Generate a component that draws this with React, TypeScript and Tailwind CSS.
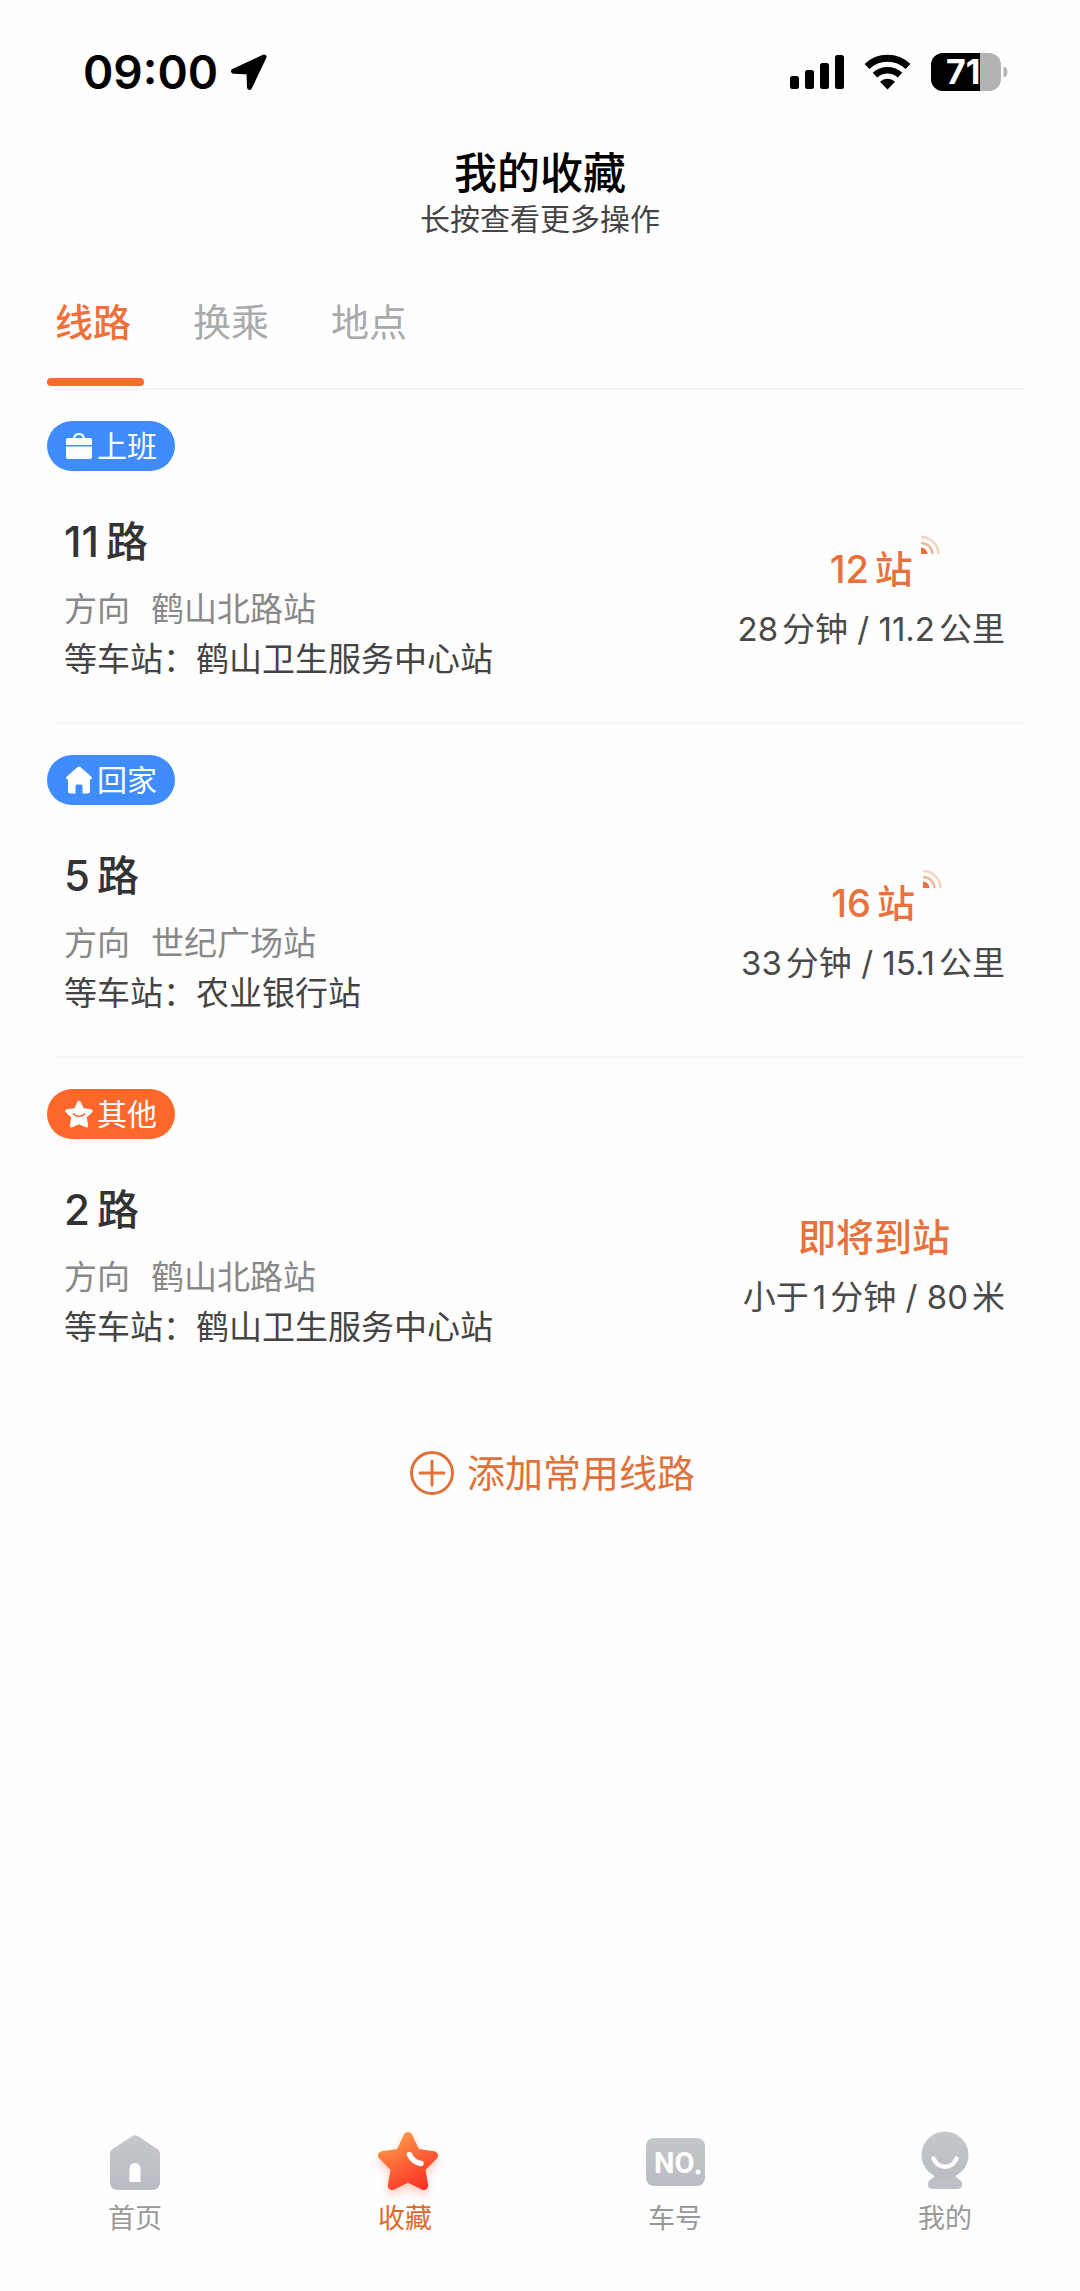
import { useState } from 'react';
import type { ReactNode } from 'react';

type TagKind = 'work' | 'home' | 'other';

interface FavoriteRoute {
  id: string;
  tag: TagKind;
  number: string;
  direction: string;
  stop: string;
  stopsLeft?: string;
  eta: string[];
}

const TABS = ['线路', '换乘', '地点'];

const ROUTES: FavoriteRoute[] = [
  {
    id: '11',
    tag: 'work',
    number: '11',
    direction: '鹤山北路站',
    stop: '鹤山卫生服务中心站',
    stopsLeft: '12',
    eta: ['28', '分钟 / 11.2', '公里'],
  },
  {
    id: '5',
    tag: 'home',
    number: '5',
    direction: '世纪广场站',
    stop: '农业银行站',
    stopsLeft: '16',
    eta: ['33', '分钟 / 15.1', '公里'],
  },
  {
    id: '2',
    tag: 'other',
    number: '2',
    direction: '鹤山北路站',
    stop: '鹤山卫生服务中心站',
    eta: ['小于', '1', '分钟 / 80', '米'],
  },
];

function BriefcaseIcon() {
  return (
    <svg width="28" height="28" viewBox="0 0 28 28" fill="none" aria-hidden="true">
      <path d="M9 6.500C9.500 3 11.500 2 14 2s4.500 1 5 4.500" stroke="#fff" strokeWidth="2" />
      <path d="M3 6h22a2 2 0 0 1 2 2v5H1V8a2 2 0 0 1 2-2Z" fill="#fff" />
      <path d="M1 14.500h26V25a2 2 0 0 1-2 2H3a2 2 0 0 1-2-2V14.500Z" fill="#fff" />
    </svg>
  );
}

function HouseIcon() {
  return (
    <svg width="28" height="28" viewBox="0 0 28 28" aria-hidden="true">
      <path
        d="M12.600 1c.8-.7 2-.7 2.800 0l11 9.700c1.200 1.100.5 2.800-1 2.800H25V25a2.500 2.500 0 0 1-2.500 2.500h-5V20a1.500 1.500 0 0 0-1.500-1.500h-4a1.500 1.500 0 0 0-1.500 1.500v7.500h-5A2.500 2.500 0 0 1 3 25V13.500h-.4c-1.500 0-2.200-1.700-1-2.800Z"
        fill="#fff"
      />
    </svg>
  );
}

function SmileStarIcon() {
  return (
    <svg width="28" height="28" viewBox="0 0 28 28" fill="none" aria-hidden="true">
      <path
        d="m14 2.500 3.400 7.300 8.600 1.200-6.100 5.700 1.500 9-7.400-3.200-7.400 3.200 1.500-9L2 11l8.600-1.200Z"
        fill="#fff"
        stroke="#fff"
        strokeWidth="3.500"
        strokeLinejoin="round"
      />
      <path d="M8.500 14c3 3 8 3 11 0" stroke="#ff672b" strokeWidth="1.700" strokeLinecap="round" />
    </svg>
  );
}

const TAGS: Record<TagKind, { label: string; className: string; icon: ReactNode }> = {
  work: { label: '上班', className: 'bg-[#3f8cff]', icon: <BriefcaseIcon /> },
  home: { label: '回家', className: 'bg-[#3f8cff]', icon: <HouseIcon /> },
  other: { label: '其他', className: 'bg-[#ff672b]', icon: <SmileStarIcon /> },
};

function StatusBar() {
  return (
    <div className="flex h-36 items-center justify-between pl-[83px] pr-[72px] text-black">
      <div className="flex items-center gap-3">
        <span className="text-[46px] leading-none font-semibold">09:00</span>
        <svg width="38" height="38" viewBox="0 0 38 38" aria-hidden="true">
          <path
            d="M34 4 3.500 18.200l15.500.8.500 15.500Z"
            fill="currentColor"
            stroke="currentColor"
            strokeWidth="5"
            strokeLinejoin="round"
          />
        </svg>
      </div>
      <div className="flex items-center">
        <svg width="54" height="36" viewBox="0 0 54 36" fill="currentColor" aria-hidden="true">
          <rect x="0" y="22" width="9" height="13" rx="2.500" />
          <rect x="15" y="16" width="9" height="19" rx="2.500" />
          <rect x="30" y="9" width="9" height="26" rx="2.500" />
          <rect x="45" y="1" width="9" height="34" rx="2.500" />
        </svg>
        <svg className="ml-5" width="47" height="36" viewBox="0 0 47 36" fill="none" aria-hidden="true">
          <path d="M3 12.500a29.500 29.500 0 0 1 41 0" stroke="currentColor" strokeWidth="7" />
          <path d="M11 21.200a18 18 0 0 1 25 0" stroke="currentColor" strokeWidth="6.500" />
          <path d="M23.500 35.500 16 27.800a10.800 10.800 0 0 1 15 0Z" fill="currentColor" />
        </svg>
        <svg className="ml-5" width="77" height="40" viewBox="0 0 77 40" role="img" aria-label="电量 71%">
          <rect x="0" y="1" width="70" height="38" rx="12" fill="#b3b3b3" />
          <path d="M12 1h37v38H12A12 12 0 0 1 0 27V13A12 12 0 0 1 12 1Z" fill="#000" />
          <path d="M72.500 14.500c3 .8 4 3 4 5.500s-1 4.700-4 5.500Z" fill="#b3b3b3" />
          <text x="15" y="32" fontSize="34" fontWeight="700" fill="#fff">
            71
          </text>
        </svg>
      </div>
    </div>
  );
}

function LiveIcon() {
  return (
    <svg
      className="absolute -top-1 left-full ml-2"
      width="20"
      height="20"
      viewBox="0 0 20 20"
      fill="none"
      aria-hidden="true"
    >
      <path d="M0 12.500A6.500 6.500 0 0 1 6.500 19H0Z" fill="#e8713c" />
      <path d="M0 8a11.500 11.500 0 0 1 11.500 11" stroke="#f3b597" strokeWidth="2.500" />
      <path d="M0 2a17.500 17.500 0 0 1 17.500 17" stroke="#f8d3c2" strokeWidth="2.500" />
    </svg>
  );
}

function RouteCard({ route, last }: { route: FavoriteRoute; last: boolean }) {
  const tag = TAGS[route.tag];

  return (
    <li>
      <div className="pt-[31px] pb-[38px]">
        <span
          className={`inline-flex h-[50px] items-center gap-1 rounded-full px-[18px] align-top text-[30px] text-white ${tag.className}`}
        >
          {tag.icon}
          {tag.label}
        </span>
        <div className="mt-[43px] flex items-center justify-between pr-[19px] pl-[17px]">
          <div className="text-[33px] leading-[50px]">
            <h2 className="mb-[14px] flex gap-[7px] text-[42px] leading-[56px] font-medium text-[#333]">
              <span>{route.number}</span>
              <span>路</span>
            </h2>
            <p className="flex gap-[21px] text-[#888]">
              <span>方向</span>
              <span>{route.direction}</span>
            </p>
            <p className="text-[#444]">等车站：{route.stop}</p>
          </div>
          <div className="flex flex-col items-center leading-[60px]">
            <p className="relative flex gap-[6px] text-[38px] font-medium text-[#e8713c]">
              {route.stopsLeft ? (
                <>
                  <span>{route.stopsLeft}</span>
                  <span>站</span>
                  <LiveIcon />
                </>
              ) : (
                '即将到站'
              )}
            </p>
            <p className="flex gap-1 text-[33px] text-[#4a4a4a]">
              {route.eta.map((part) => (
                <span key={part}>{part}</span>
              ))}
            </p>
          </div>
        </div>
      </div>
      {last ? null : <hr className="ml-2 border-t-2 border-[#f7f7f7]" />}
    </li>
  );
}

function NavHomeIcon() {
  return (
    <svg width="60" height="60" viewBox="0 0 60 60" aria-hidden="true">
      <path
        d="M27 5.200c1.800-1.200 4.200-1.200 6 0l19 12.600c1.900 1.200 3 3 3 5.200v28c0 5-3 8-8 8H13c-5 0-8-3-8-8V23c0-2.200 1.100-4 3-5.200Z"
        fill="url(#gray)"
      />
      <path d="M24.500 51V37.500a5.500 5.500 0 0 1 11 0V51Z" fill="#fff" />
    </svg>
  );
}

function NavStarIcon() {
  return (
    <svg className="ml-[6px] overflow-visible" width="60" height="60" viewBox="0 0 60 60" fill="none" aria-hidden="true">
      <defs>
        <linearGradient id="star" x1="14" y1="6" x2="42" y2="58" gradientUnits="userSpaceOnUse">
          <stop stopColor="#ff9a4a" />
          <stop offset="0.5" stopColor="#fb6334" />
          <stop offset="1" stopColor="#ff3126" />
        </linearGradient>
        <filter id="glow" x="-30%" y="-30%" width="160%" height="170%">
          <feDropShadow dx="0" dy="5" stdDeviation="4" floodColor="#ff5a36" floodOpacity="0.3" />
        </filter>
      </defs>
      <path
        d="M25.800 3.800c1.800-3.700 6.600-3.700 8.400 0l6.600 14.300 15.300 2.100c4 .6 5.300 4.700 2.500 7.500L47.500 38.800l2.600 14.900c.6 4-3 6.400-6.400 4.700L30 51.800l-13.700 6.600c-3.400 1.700-7-.7-6.400-4.700l2.600-14.900L1.400 27.700c-2.800-2.800-1.500-6.900 2.500-7.500l15.300-2.100Z"
        fill="url(#star)"
        filter="url(#glow)"
      />
      <path d="M31.500 23.500c2 4.800 6.200 8 11.500 9" stroke="#fff" strokeWidth="5.500" strokeLinecap="round" />
    </svg>
  );
}

function NavNumberIcon() {
  return (
    <svg width="60" height="60" viewBox="0 0 60 60" aria-hidden="true">
      <rect x="1" y="7" width="59" height="48" rx="8" fill="url(#gray)" />
      <text x="9" y="42" fontSize="29" fontWeight="700" fill="#fff" className="font-['Roboto',sans-serif]">
        NO
      </text>
      <circle cx="53" cy="41" r="2.500" fill="#fff" />
    </svg>
  );
}

function NavMeIcon() {
  return (
    <svg width="60" height="60" viewBox="0 0 60 60" fill="none" aria-hidden="true">
      <path d="M20 44h20c1 2.500 3.500 3.500 5 5 4 4 2.500 9-3 9H18c-5.500 0-7-5-3-9 1.500-1.500 4-2.500 5-5Z" fill="#bdc1c6" />
      <circle cx="30" cy="24" r="23.500" fill="url(#gray)" />
      <path d="M18.500 27.500c4.500 11 18.500 11 23 0" stroke="#fff" strokeWidth="4.500" strokeLinecap="round" />
    </svg>
  );
}

const NAV_ITEMS = [
  { label: '首页', icon: <NavHomeIcon /> },
  { label: '收藏', icon: <NavStarIcon />, active: true },
  { label: '车号', icon: <NavNumberIcon /> },
  { label: '我的', icon: <NavMeIcon /> },
];

function BottomNav() {
  return (
    <nav className="mt-auto flex pb-[52px]">
      {/* shared fill for the inactive icons */}
      <svg className="absolute" width="0" height="0" aria-hidden="true">
        <defs>
          <linearGradient id="gray" x1="0" y1="0" x2="0" y2="1">
            <stop stopColor="#c4c8cb" />
            <stop offset="1" stopColor="#b9bdc3" />
          </linearGradient>
        </defs>
      </svg>
      {NAV_ITEMS.map((item) => (
        <a
          key={item.label}
          href="#"
          aria-current={item.active ? 'page' : undefined}
          className={`flex flex-1 flex-col items-center gap-2 text-[27px] leading-10 ${
            item.active ? 'text-[#e0682f]' : 'text-[#999]'
          }`}
        >
          {item.icon}
          {item.label}
        </a>
      ))}
    </nav>
  );
}

export default function App() {
  const [activeTab, setActiveTab] = useState(TABS[0]);

  return (
    <div className="flex min-h-screen flex-col bg-[#fefefe] font-['Inter','Noto_Sans_CJK_SC',sans-serif]">
      <StatusBar />
      <header className="pt-px text-center">
        <h1 className="text-[43px] leading-[56px] font-medium text-black">我的收藏</h1>
        <p className="text-[30px] leading-9 text-[#444]">长按查看更多操作</p>
      </header>
      <main className="mt-[61px] pr-14 pl-[47px]">
        <div role="tablist" className="flex gap-[41px]">
          {TABS.map((tab) => (
            <button
              key={tab}
              type="button"
              role="tab"
              aria-selected={tab === activeTab}
              onClick={() => setActiveTab(tab)}
              className={`text-[38px] leading-[48px] ${
                tab === activeTab ? 'font-medium text-[#f0703a]' : 'text-[#aaa]'
              }`}
            >
              <span className="block pr-[13px] pl-2">{tab}</span>
              <span
                className={`mt-8 block h-2 rounded-full ${tab === activeTab ? 'bg-[#fc6a2c]' : 'bg-transparent'}`}
              />
            </button>
          ))}
        </div>
        <hr className="mt-[2px] ml-2 border-t-2 border-[#f3f3f3]" />
        <ul>
          {ROUTES.map((route, index) => (
            <RouteCard key={route.id} route={route} last={index === ROUTES.length - 1} />
          ))}
        </ul>
      </main>
      <button
        type="button"
        className="mx-auto mt-[59px] flex items-center gap-3 pl-6 text-[38px] leading-[48px] text-[#e0713a]"
      >
        <svg width="46" height="46" viewBox="0 0 46 46" fill="none" stroke="currentColor" strokeWidth="3" aria-hidden="true">
          <circle cx="23" cy="23" r="20.500" />
          <path d="M11 23h24M23 11v24" strokeLinecap="round" />
        </svg>
        添加常用线路
      </button>
      <BottomNav />
    </div>
  );
}
